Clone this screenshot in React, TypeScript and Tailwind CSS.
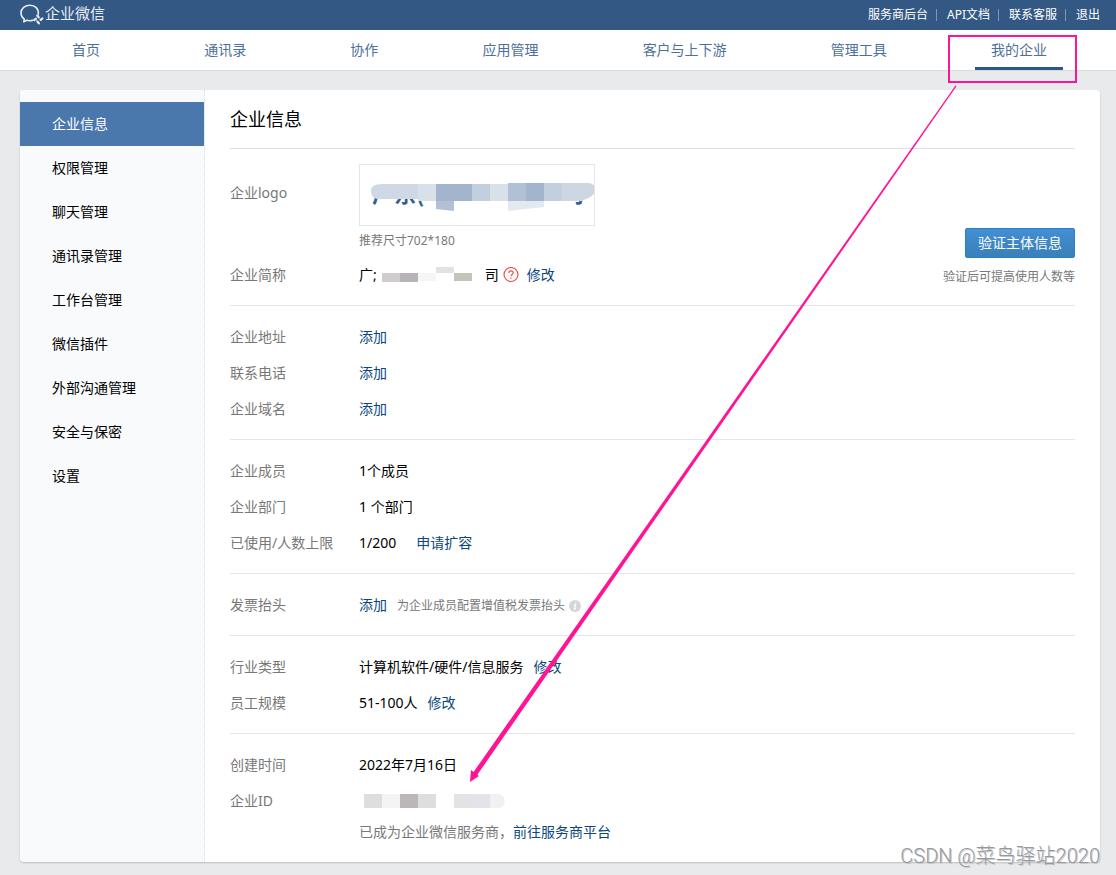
import { ReactNode } from 'react';

const topLinks = ['服务商后台', 'API文档', '联系客服', '退出'];

const navItems = ['首页', '通讯录', '协作', '应用管理', '客户与上下游', '管理工具', '我的企业'];

const sideItems = [
  '企业信息',
  '权限管理',
  '聊天管理',
  '通讯录管理',
  '工作台管理',
  '微信插件',
  '外部沟通管理',
  '安全与保密',
  '设置',
];

function Logo() {
  return (
    <svg width="24" height="22" viewBox="0 0 24 22" fill="none" stroke="#e6ecf3" strokeWidth="1.6" strokeLinecap="round" strokeLinejoin="round">
      <path d="M18.300 10.200C18.900 4.600 15 1.300 10 1.300C5 1.300 1 4.500 1 9C1 11.700 2.300 13.800 4.300 15.200L3.800 17.800L6.800 16.300C8.900 16.900 11 16.800 12.800 16.200" />
      <path d="M17.300 11.600L18.600 13.200M22.300 14.500L20.700 15.900M18.900 19.300L17.500 17.700M14.200 16.100L15.800 14.800" strokeWidth="2.300" />
      <path d="M18.600 13.200L20.700 15.900M17.500 17.700L15.800 14.800" strokeWidth="0.500" />
    </svg>
  );
}

function Section({ children }: { children: ReactNode }) {
  return <section className="border-b border-[#e4e6e9] pt-[13px] pb-3">{children}</section>;
}

function Row({ label, children }: { label: string; children: ReactNode }) {
  return (
    <dl className="flex h-9 items-center">
      <dt className="w-[129px] shrink-0 text-[#787878]">{label}</dt>
      <dd className="flex items-center">{children}</dd>
    </dl>
  );
}

function TextLink({ children }: { children: ReactNode }) {
  return (
    <a href="#" className="text-[#0b477d]">
      {children}
    </a>
  );
}

// Company logo with most of the name blurred out
function CompanyLogo() {
  return (
    <svg width="234" height="60" viewBox="0 0 234 60" className="block">
      <g fill="#335f8f" fontSize="22" fontWeight="700" fontFamily="'Noto Sans CJK SC', sans-serif">
        <text x="12" y="37">广东(</text>
        <text x="202" y="37">司</text>
      </g>
      <rect x="8" y="12" width="60" height="10" fill="#fff" />
      <rect x="200" y="30" width="13" height="12" fill="#fff" />
      <path d="M22 19C14 19 11 22 11 26C11 31 14 34 18 34H58V36H76V19Z" fill="#cfd8e4" />
      <rect x="58" y="19" width="18" height="17" fill="#d8e0e9" />
      <rect x="76" y="19" width="36" height="17" fill="#a3b5cc" />
      <path d="M76 36H94V46L76 44Z" fill="#b3c1d5" />
      <rect x="112" y="19" width="18" height="17" fill="#c2cfde" />
      <rect x="130" y="19" width="18" height="17" fill="#d8e0e9" />
      <rect x="148" y="18" width="18" height="18" fill="#b1c0d4" />
      <rect x="166" y="18" width="18" height="18" fill="#a3b5cc" />
      <path d="M148 36H184V42L148 46Z" fill="#e4e9ef" />
      <rect x="184" y="18" width="18" height="18" fill="#c2cfde" />
      <path d="M202 18H228C233 18 235 21 235 25C235 31 228 33 222 36H202Z" fill="#cdd6e3" />
    </svg>
  );
}

export default function App() {
  return (
    <div className="relative min-h-screen bg-[#e8eaec] pb-[13px] font-['Noto_Sans','Noto_Sans_CJK_SC',sans-serif] text-sm text-black">
      <header>
        <div className="flex h-[30px] items-center justify-between bg-[#335883] pr-4 pl-5">
          <a href="#" className="flex items-center gap-px text-[#e6ecf3]">
            <Logo />
            <span className="pb-0.5 text-[15px]">企业微信</span>
          </a>
          <div className="flex items-center text-xs text-white">
            {topLinks.map((item, i) => (
              <div key={item} className="flex items-center">
                {i > 0 && <span className="mr-[10px] ml-2 h-3 w-px bg-[#7f96b3]" />}
                <a href="#">{item}</a>
              </div>
            ))}
          </div>
        </div>
        <nav className="flex h-[41px] justify-between border-b border-[#d9dbdd] bg-white pr-[53px] pl-14 text-[#4d709b]">
          {navItems.map(item => (
            <a
              key={item}
              href="#"
              className={`flex h-10 items-center border-b-[3px] px-4 pt-0.5 ${item === '我的企业' ? 'border-[#2f5785]' : 'border-transparent'}`}
            >
              {item}
            </a>
          ))}
        </nav>
      </header>

      <div className="mx-5 mt-[19px] mr-4 flex rounded bg-white shadow-[0_1px_2px_rgba(0,0,0,0.2)]">
        <aside className="w-[185px] shrink-0 rounded-l border-r border-dotted border-[#d3dce3] bg-[#f9fafc] pt-3">
          {sideItems.map((item, i) => (
            <a
              key={item}
              href="#"
              className={`flex h-11 items-center pl-8 ${i === 0 ? 'bg-[#4a78ad] text-white' : ''}`}
            >
              {item}
            </a>
          ))}
        </aside>

        <main className="flex-1 px-[25px] pb-[17px]">
          <h1 className="flex h-[59px] items-center border-b border-[#d9e0e6] text-lg">企业信息</h1>

          <section className="flex items-end justify-between border-b border-[#e4e6e9] pt-[15px] pb-3">
            <div>
              <div className="flex">
                <div className="w-[129px] shrink-0 pt-[19px] text-[#787878]">企业logo</div>
                <div>
                  <div className="border border-[#e4e6e9]">
                    <CompanyLogo />
                  </div>
                  <p className="h-[31px] text-xs leading-[30px] text-[#787878]">推荐尺寸702*180</p>
                </div>
              </div>
              <Row label="企业简称">
                <span>广;</span>
                <svg width="92" height="16" viewBox="0 0 92 16" className="mx-1">
                  <rect x="1" y="6" width="18" height="9" fill="#cfcdce" />
                  <rect x="19" y="6" width="18" height="9" fill="#b7b3b7" />
                  <rect x="37" y="6" width="18" height="8" fill="#f6f6f6" />
                  <rect x="55" y="0" width="18" height="6" fill="#e1e3e2" />
                  <rect x="73" y="6" width="18" height="8" fill="#c3c4b9" />
                </svg>
                <span className="ml-2">司</span>
                <svg width="16" height="16" viewBox="0 0 16 16" fill="none" stroke="#ef4f47" strokeWidth="1.200" className="mr-2 ml-1">
                  <circle cx="8" cy="7.500" r="7" />
                  <path d="M5.800 6C5.800 3.300 10.200 3.300 10.200 5.800C10.200 7.500 8 7.300 8 9.200M8 10.400V11.700" />
                </svg>
                <TextLink>修改</TextLink>
              </Row>
            </div>
            <div className="flex flex-col items-end">
              <button className="h-[30px] w-[110px] rounded-xs border border-[#2a80c4] bg-linear-to-b from-[#428fd4] to-[#3a80b8] text-white">
                验证主体信息
              </button>
              <p className="h-[35px] text-xs leading-[38px] text-[#787878]">验证后可提高使用人数等</p>
            </div>
          </section>

          <Section>
            <Row label="企业地址"><TextLink>添加</TextLink></Row>
            <Row label="联系电话"><TextLink>添加</TextLink></Row>
            <Row label="企业域名"><TextLink>添加</TextLink></Row>
          </Section>

          <Section>
            <Row label="企业成员">1个成员</Row>
            <Row label="企业部门">1 个部门</Row>
            <Row label="已使用/人数上限">
              <span className="mr-5">1/200</span>
              <TextLink>申请扩容</TextLink>
            </Row>
          </Section>

          <Section>
            <Row label="发票抬头">
              <TextLink>添加</TextLink>
              <div className="flex items-center pt-0.5 pl-[10px]">
                <span className="mr-1 text-xs text-[#787878]">为企业成员配置增值税发票抬头</span>
                <svg width="12" height="12" viewBox="0 0 12 12">
                  <circle cx="6" cy="6" r="6" fill="#d5d6d7" />
                  <path d="M6.900 2.500L6.700 3.500M5 5H6.300L5.500 9H6.700" fill="none" stroke="#fff" strokeWidth="1.300" />
                </svg>
              </div>
            </Row>
          </Section>

          <Section>
            <Row label="行业类型">
              <span className="mr-[10px]">计算机软件/硬件/信息服务</span>
              <TextLink>修改</TextLink>
            </Row>
            <Row label="员工规模">
              <span className="mr-[10px]">51-100人</span>
              <TextLink>修改</TextLink>
            </Row>
          </Section>

          <div className="pt-[13px]">
            <Row label="创建时间">2022年7月16日</Row>
            <Row label="企业ID">
              <svg width="148" height="14" viewBox="0 0 148 14">
                <rect x="5" width="18" height="14" fill="#dededd" />
                <rect x="23" width="18" height="14" fill="#f4f4f4" />
                <rect x="41" width="18" height="14" fill="#bbb6b8" />
                <rect x="59" width="18" height="14" fill="#dededd" />
                <rect x="95" width="18" height="14" fill="#e2e4e3" />
                <rect x="113" width="18" height="14" fill="#e3e4e9" />
                <path d="M131 0H139C148 0 148 14 139 14H131Z" fill="#f1f1f2" />
              </svg>
            </Row>
            <p className="ml-[129px] leading-[26px] text-[#787878]">
              已成为企业微信服务商，<TextLink>前往服务商平台</TextLink>
            </p>
          </div>
        </main>
      </div>

      {/* Highlight box and arrow over the page */}
      <div className="pointer-events-none absolute top-[35px] right-[39px] h-12 w-[129px] border-2 border-[#ff1493]" />
      <svg width="490" height="698" viewBox="0 0 490 698" className="pointer-events-none absolute top-[85px] right-[158px]">
        <path d="M487.500 0.500L488.500 1.200L8.500 691L4.500 688.500Z" fill="#ff1493" />
        <path d="M2 697L3 685L11 691Z" fill="#ff1493" />
      </svg>
      <div className="pointer-events-none absolute right-4 bottom-[5px] font-['Roboto','Noto_Sans_CJK_SC',sans-serif] text-xl font-light text-[#96989b] [text-shadow:1px_1px_0_#c8cacc]">
        CSDN @菜鸟驿站2020
      </div>
    </div>
  );
}
